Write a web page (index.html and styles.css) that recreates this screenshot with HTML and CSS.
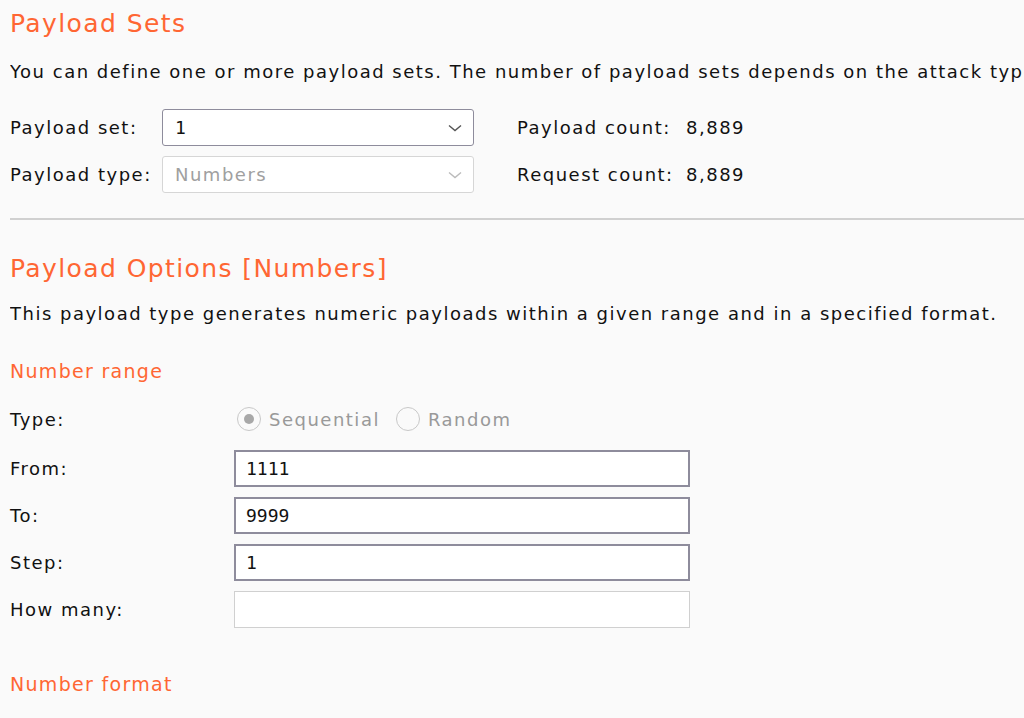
FILE: index.html
```html
<!DOCTYPE html>
<html>
<head>
<meta charset="utf-8">
<link rel="stylesheet" href="styles.css">
</head>
<body>
<div class="page">
  <section class="sec sec-sets">
    <h2 class="title">Payload Sets</h2>
    <p class="desc">You can define one or more payload sets. The number of payload sets depends on the attack type defined in the Positions tab.</p>
    <div class="sets-grid">
      <span class="lbl">Payload set:</span>
      <div class="select">
        <span class="val mono">1</span>
        <svg class="chev" width="14" height="8" viewBox="0 0 14 8"><path d="M1 1.5 L7 6.5 L13 1.5" fill="none" stroke="#555" stroke-width="1.4"/></svg>
      </div>
      <span class="count"><span class="count-lbl">Payload count:</span>8,889</span>
      <span class="lbl">Payload type:</span>
      <div class="select disabled">
        <span class="val">Numbers</span>
        <svg class="chev" width="14" height="8" viewBox="0 0 14 8"><path d="M1 1.5 L7 6.5 L13 1.5" fill="none" stroke="#bbb" stroke-width="1.4"/></svg>
      </div>
      <span class="count"><span class="count-lbl">Request count:</span>8,889</span>
    </div>
  </section>
  <hr class="sep">
  <section class="sec sec-opts">
    <h2 class="title">Payload Options [Numbers]</h2>
    <p class="desc">This payload type generates numeric payloads within a given range and in a specified format.</p>
    <h3 class="sub">Number range</h3>
    <div class="type-row">
      <span class="lbl">Type:</span>
      <div class="radios">
        <label class="radio"><span class="dot on"></span>Sequential</label>
        <label class="radio"><span class="dot"></span>Random</label>
      </div>
    </div>
    <div class="range-grid">
      <span class="lbl">From:</span>
      <div class="input mono">1111</div>
      <span class="lbl">To:</span>
      <div class="input mono">9999</div>
      <span class="lbl">Step:</span>
      <div class="input mono">1</div>
      <span class="lbl">How many:</span>
      <div class="input disabled"></div>
    </div>
    <h3 class="sub sub-format">Number format</h3>
  </section>
</div>
</body>
</html>
```
FILE: styles.css
```css
html, body {
  margin: 0;
  padding: 0;
  background: #fafafa;
}
body {
  font-family: "DejaVu Sans", "Liberation Sans", sans-serif;
  font-size: 18px;
  letter-spacing: 1.5px;
  color: #111;
  overflow: hidden;
  width: 1024px;
  height: 718px;
}
.page {
  padding-left: 10px;
  overflow: hidden;
}
.sec-sets {
  padding-top: 9px;
}
.title {
  margin: 0;
  font-size: 25px;
  letter-spacing: 1.4px;
  font-weight: normal;
  color: #ff6633;
  line-height: 30px;
  height: 30px;
}
.desc {
  margin: 0;
  margin-top: 19px;
  line-height: 28px;
  white-space: nowrap;
  overflow: hidden;
}
.sets-grid {
  display: grid;
  grid-template-columns: 152px 312px auto;
  grid-auto-rows: 37px;
  row-gap: 10px;
  margin-top: 23px;
  align-items: center;
}
.count {
  padding-left: 43px;
  display: flex;
}
.count-lbl {
  width: 169px;
}
.select {
  box-sizing: border-box;
  height: 37px;
  border: 1px solid #8e8c9c;
  border-radius: 3px;
  background: #fff;
  display: flex;
  align-items: center;
  justify-content: space-between;
  padding: 0 11px 0 12px;
}
.select.disabled {
  border-color: #d6d6d6;
}
.select.disabled .val {
  color: #a0a0a0;
}
.mono {
  font-family: "DejaVu Sans Mono", "Liberation Mono", monospace;
  letter-spacing: 0;
}
.sep {
  margin: 25px 0 0 0;
  border: 0;
  height: 2px;
  background: #d0d0d0;
}
.sec-opts {
  padding-top: 34px;
}
.sec-opts .desc {
  margin-top: 16px;
}
.sub {
  margin: 0;
  margin-top: 29px;
  font-size: 19px;
  letter-spacing: 1.3px;
  font-weight: normal;
  color: #ff6633;
  line-height: 28px;
}
.type-row {
  display: grid;
  grid-template-columns: 224px auto;
  height: 36px;
  align-items: center;
  margin-top: 16px;
}
.radios {
  display: flex;
  gap: 16px;
  color: #999;
  margin-left: 3px;
}
.radio {
  display: flex;
  align-items: center;
  gap: 8px;
}
.dot {
  box-sizing: border-box;
  width: 24px;
  height: 24px;
  border-radius: 50%;
  border: 1.5px solid #c8c8c8;
  background: #fafafa;
  position: relative;
}
.dot.on::after {
  content: "";
  position: absolute;
  left: 5.5px;
  top: 5.5px;
  width: 10px;
  height: 10px;
  border-radius: 50%;
  background: #a8a8a8;
}
.range-grid {
  display: grid;
  grid-template-columns: 224px 456px;
  grid-auto-rows: 37px;
  row-gap: 10px;
  margin-top: 13px;
  align-items: center;
}
.input {
  box-sizing: border-box;
  height: 37px;
  border: 2px solid #8e8c9c;
  background: #fff;
  display: flex;
  align-items: center;
  padding-left: 10px;
  font-size: 18px;
}
.input.disabled {
  border: 1px solid #d0d0d0;
}
.sub-format {
  margin-top: 42px;
}
```
